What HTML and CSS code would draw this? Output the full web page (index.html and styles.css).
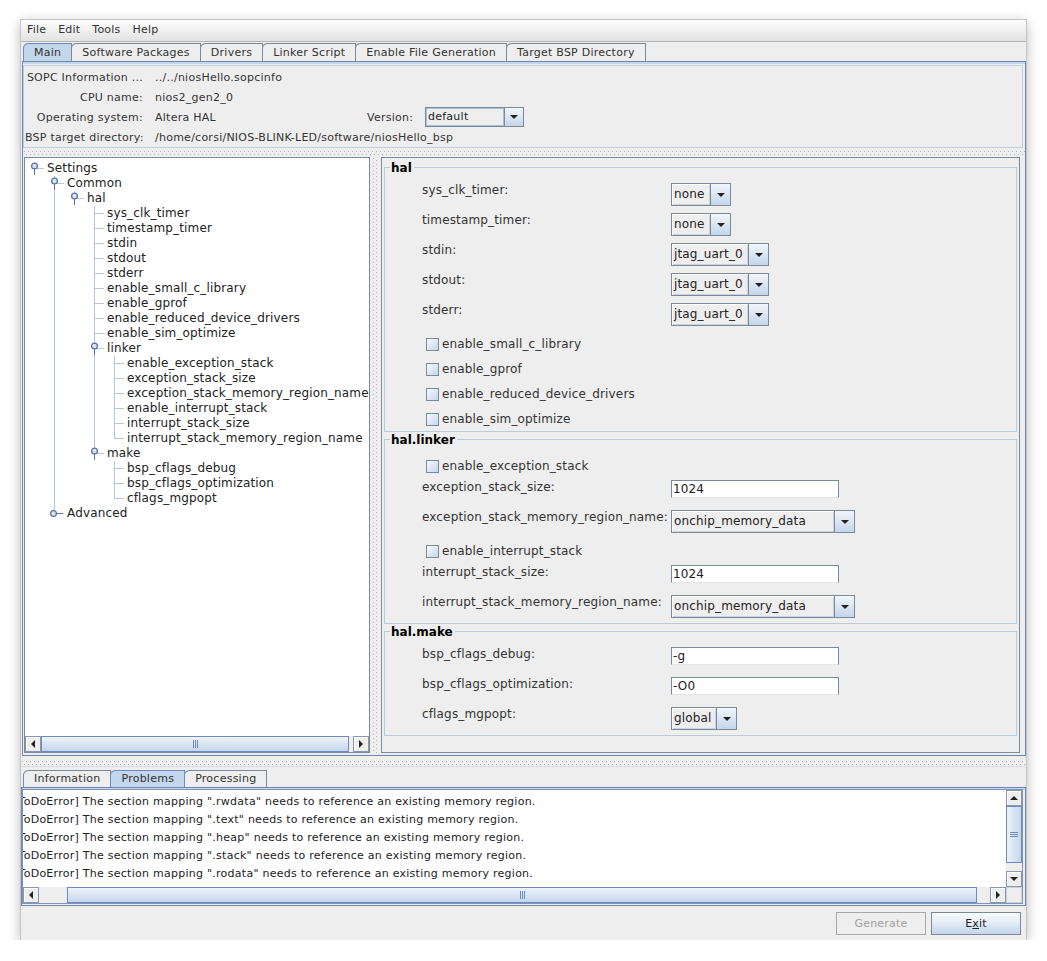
FILE: index.html
```html
<!DOCTYPE html>
<html lang="en">
<head>
    <meta charset="UTF-8">
    <title>Nios II BSP Editor</title>
    <link rel="stylesheet" href="styles.css">
</head>
<body>
    <div class="window">
        <div class="menubar">
            <span class="menu">File</span>
            <span class="menu">Edit</span>
            <span class="menu">Tools</span>
            <span class="menu">Help</span>
        </div>

        <div class="top-tabs">
            <div class="tab-strip">
                <div class="tab selected">Main</div>
                <div class="tab">Software Packages</div>
                <div class="tab">Drivers</div>
                <div class="tab">Linker Script</div>
                <div class="tab">Enable File Generation</div>
                <div class="tab">Target BSP Directory</div>
            </div>

            <div class="tab-content main-content">
                <div class="info-panel">
                    <span class="info-label">SOPC Information ...</span>
                    <span class="info-value wide">../../niosHello.sopcinfo</span>
                    <span class="info-label">CPU name:</span>
                    <span class="info-value wide">nios2_gen2_0</span>
                    <span class="info-label">Operating system:</span>
                    <span class="info-value">Altera HAL</span>
                    <span class="info-label">Version:</span>
                    <div class="combo combo-version">
                        <span class="combo-value">default</span>
                        <span class="combo-arrow"><i class="tri-down"></i></span>
                    </div>
                    <span class="info-label">BSP target directory:</span>
                    <span class="info-value wide">/home/corsi/NIOS-BLINK-LED/software/niosHello_bsp</span>
                </div>

                <div class="divider-h"></div>

                <div class="split">
                    <div class="tree-pane">
                        <div class="tree" id="tree"></div>
                        <div class="hscroll tree-hscroll">
                            <span class="sb-btn"><i class="tri-left"></i></span>
                            <span class="sb-thumb"></span>
                            <span class="sb-track tail"></span>
                            <span class="sb-btn"><i class="tri-right"></i></span>
                        </div>
                    </div>

                    <div class="divider-v"></div>

                    <div class="settings-pane">
                        <section class="group">
                            <div class="group-title"><span>hal</span></div>
                            <div class="group-body">
                                <div class="field-row">
                                    <label>sys_clk_timer:</label>
                                    <div class="combo combo-none"><span class="combo-value">none</span><span class="combo-arrow"><i class="tri-down"></i></span></div>
                                </div>
                                <div class="field-row">
                                    <label>timestamp_timer:</label>
                                    <div class="combo combo-none"><span class="combo-value">none</span><span class="combo-arrow"><i class="tri-down"></i></span></div>
                                </div>
                                <div class="field-row">
                                    <label>stdin:</label>
                                    <div class="combo combo-uart"><span class="combo-value">jtag_uart_0</span><span class="combo-arrow"><i class="tri-down"></i></span></div>
                                </div>
                                <div class="field-row">
                                    <label>stdout:</label>
                                    <div class="combo combo-uart"><span class="combo-value">jtag_uart_0</span><span class="combo-arrow"><i class="tri-down"></i></span></div>
                                </div>
                                <div class="field-row">
                                    <label>stderr:</label>
                                    <div class="combo combo-uart"><span class="combo-value">jtag_uart_0</span><span class="combo-arrow"><i class="tri-down"></i></span></div>
                                </div>
                                <div class="check-row"><span class="check-box"></span>enable_small_c_library</div>
                                <div class="check-row"><span class="check-box"></span>enable_gprof</div>
                                <div class="check-row"><span class="check-box"></span>enable_reduced_device_drivers</div>
                                <div class="check-row"><span class="check-box"></span>enable_sim_optimize</div>
                            </div>
                        </section>

                        <section class="group">
                            <div class="group-title"><span>hal.linker</span></div>
                            <div class="group-body">
                                <div class="check-row"><span class="check-box"></span>enable_exception_stack</div>
                                <div class="field-row">
                                    <label>exception_stack_size:</label>
                                    <div class="text-field">1024</div>
                                </div>
                                <div class="field-row">
                                    <label>exception_stack_memory_region_name:</label>
                                    <div class="combo combo-memory"><span class="combo-value">onchip_memory_data</span><span class="combo-arrow"><i class="tri-down"></i></span></div>
                                </div>
                                <div class="check-row"><span class="check-box"></span>enable_interrupt_stack</div>
                                <div class="field-row">
                                    <label>interrupt_stack_size:</label>
                                    <div class="text-field">1024</div>
                                </div>
                                <div class="field-row">
                                    <label>interrupt_stack_memory_region_name:</label>
                                    <div class="combo combo-memory"><span class="combo-value">onchip_memory_data</span><span class="combo-arrow"><i class="tri-down"></i></span></div>
                                </div>
                            </div>
                        </section>

                        <section class="group">
                            <div class="group-title"><span>hal.make</span></div>
                            <div class="group-body">
                                <div class="field-row">
                                    <label>bsp_cflags_debug:</label>
                                    <div class="text-field">-g</div>
                                </div>
                                <div class="field-row">
                                    <label>bsp_cflags_optimization:</label>
                                    <div class="text-field">-O0</div>
                                </div>
                                <div class="field-row">
                                    <label>cflags_mgpopt:</label>
                                    <div class="combo combo-global"><span class="combo-value">global</span><span class="combo-arrow"><i class="tri-down"></i></span></div>
                                </div>
                            </div>
                        </section>
                    </div>
                </div>
            </div>
        </div>

        <div class="divider-h outer"></div>

        <div class="bottom-tabs">
            <div class="tab-strip small">
                <div class="tab">Information</div>
                <div class="tab selected">Problems</div>
                <div class="tab">Processing</div>
            </div>
            <div class="tab-content bottom-content">
                <div class="msg-pane">
                    <div class="msg-row">
                        <div class="messages">
                            <div class="msg">[ToDoError] The section mapping ".rwdata" needs to reference an existing memory region.</div>
                            <div class="msg">[ToDoError] The section mapping ".text" needs to reference an existing memory region.</div>
                            <div class="msg">[ToDoError] The section mapping ".heap" needs to reference an existing memory region.</div>
                            <div class="msg">[ToDoError] The section mapping ".stack" needs to reference an existing memory region.</div>
                            <div class="msg">[ToDoError] The section mapping ".rodata" needs to reference an existing memory region.</div>
                            <div class="msg">[ToDoError] The section mapping ".bss" needs to reference an existing memory region.</div>
                        </div>
                        <div class="vscroll">
                            <span class="sb-btn"><i class="tri-up"></i></span>
                            <span class="sb-thumb"></span>
                            <span class="sb-track"></span>
                            <span class="sb-btn"><i class="tri-down"></i></span>
                        </div>
                    </div>
                    <div class="hscroll msg-hscroll">
                        <span class="sb-btn"><i class="tri-left"></i></span>
                        <span class="sb-track lead"></span>
                        <span class="sb-thumb"></span>
                        <span class="sb-track tail"></span>
                        <span class="sb-btn"><i class="tri-right"></i></span>
                        <span class="sb-corner"></span>
                    </div>
                </div>
            </div>
        </div>

        <div class="button-bar">
            <button class="btn" disabled>Generate</button>
            <button class="btn">E<u>x</u>it</button>
        </div>
    </div>

    <script>
        const settingsTree = ['Settings', [
            ['Common', [
                ['hal', [
                    'sys_clk_timer', 'timestamp_timer', 'stdin', 'stdout', 'stderr',
                    'enable_small_c_library', 'enable_gprof', 'enable_reduced_device_drivers', 'enable_sim_optimize',
                    ['linker', [
                        'enable_exception_stack', 'exception_stack_size', 'exception_stack_memory_region_name',
                        'enable_interrupt_stack', 'interrupt_stack_size', 'interrupt_stack_memory_region_name'
                    ]],
                    ['make', ['bsp_cflags_debug', 'bsp_cflags_optimization', 'cflags_mgpopt']]
                ]]
            ]],
            ['Advanced', null]
        ]];

        const LINE = '#b3c7df';
        const KEY = '#5873a8';
        const treeEl = document.getElementById('tree');

        function addRow(label, level, isLast, legs, kind) {
            const width = (level + 1) * 20;
            const cx = level * 20 + 9.5;
            let svg = '';

            legs.forEach((on, k) => {
                if (on) svg += `<line x1="${k * 20 + 9.5}" y1="0" x2="${k * 20 + 9.5}" y2="15" stroke="${LINE}"/>`;
            });
            if (level > 0) {
                svg += `<line x1="${cx}" y1="0" x2="${cx}" y2="${isLast ? 8 : 15}" stroke="${LINE}"/>`;
            }
            svg += `<line x1="${cx}" y1="7.5" x2="${level * 20 + 19}" y2="7.5" stroke="${LINE}"/>`;

            if (kind === 'open') {
                svg += `<line x1="${cx}" y1="8" x2="${cx}" y2="14" stroke="${KEY}" stroke-width="1.6"/>`;
                svg += `<circle cx="${cx}" cy="5" r="2.9" fill="#dbe6f3" stroke="${KEY}" stroke-width="1.3"/>`;
            } else if (kind === 'closed') {
                svg += `<line x1="${cx + 2}" y1="7.5" x2="${cx + 8}" y2="7.5" stroke="${KEY}" stroke-width="1.6"/>`;
                svg += `<circle cx="${cx - 1}" cy="7.5" r="2.9" fill="#dbe6f3" stroke="${KEY}" stroke-width="1.3"/>`;
            }

            const row = document.createElement('div');
            row.className = 'tree-row';
            row.innerHTML = `<svg width="${width}" height="15" viewBox="0 0 ${width} 15">${svg}</svg><span class="tree-label">${label}</span>`;
            treeEl.appendChild(row);
        }

        function walk(node, level, isLast, legs) {
            const label = Array.isArray(node) ? node[0] : node;
            const children = Array.isArray(node) ? node[1] : undefined;
            const kind = children === undefined ? 'leaf' : (children === null ? 'closed' : 'open');

            addRow(label, level, isLast, legs, kind);

            if (Array.isArray(children)) {
                const childLegs = legs.concat([level >= 1 && !isLast]);
                children.forEach((child, i) => walk(child, level + 1, i === children.length - 1, childLegs));
            }
        }

        walk(settingsTree, 0, true, []);
    </script>
</body>
</html>
```

FILE: styles.css
```css
* {
    box-sizing: border-box;
    margin: 0;
    padding: 0;
}

body {
    font-family: "DejaVu Sans", "Liberation Sans", sans-serif;
    font-size: 12px;
    letter-spacing: 0.15px;
    color: #333;
    background-color: #fff;
}

.window {
    margin: 20px 0 0 21px;
    width: 1005px;
    height: 920px;
    display: flex;
    flex-direction: column;
    background-color: #eee;
    box-shadow: 0 0 0 1px #c4c4c4, 0 3px 12px rgba(0,0,0,0.3);
}

/* menu bar */
.menubar {
    flex: none;
    height: 22px;
    display: flex;
    align-items: center;
    padding: 0 0 2px 0;
    background: linear-gradient(#fdfdfd, #e2e2e2);
    border-bottom: 1px solid #b4b4b4;
}

.menu {
    padding: 0 6px;
    font-size: 11px;
    letter-spacing: 0.2px;
    color: #333;
}

/* tabbed panes */
.top-tabs {
    flex: none;
    height: 714px;
    padding-top: 1px;
    margin-left: 1px;
    display: flex;
    flex-direction: column;
}

.tab-strip {
    flex: none;
    display: flex;
    height: 18px;
    padding-left: 1px;
}

.tab-strip.small {
    height: 17px;
    margin-top: 3px;
    padding-left: 2px;
}

.tab {
    height: 100%;
    padding: 0 10px;
    font-size: 11px;
    letter-spacing: 0.25px;
    line-height: 17px;
    color: #333;
    background-color: #eee;
    border: 1px solid #7a8a99;
    border-bottom: none;
    border-top-left-radius: 6px 5px;
    margin-right: -1px;
    white-space: nowrap;
}

.tab-strip.small .tab {
    line-height: 16px;
}

.tab.selected {
    background-color: #c3d6ec;
    border-color: #6d8ac0;
}

.tab-content {
    border: 1px solid #6f87b0;
    background-color: #eee;
    box-shadow: inset 0 2px 0 #c3d6ec;
}

.main-content {
    height: 695px;
    padding: 3px 0 2px 0;
    display: flex;
    flex-direction: column;
}

/* SOPC info block */
.info-panel {
    flex: none;
    height: 83px;
    margin-right: 2px;
    padding: 1px 0 0 1px;
    border: 1px solid #b8cfe5;
    display: grid;
    grid-template-columns: 118px 200px 46px 99px;
    grid-template-rows: repeat(4, 20px);
    column-gap: 12px;
    align-items: center;
    font-size: 11px;
    letter-spacing: 0.25px;
}

.info-label {
    text-align: right;
    white-space: nowrap;
}

.info-value {
    white-space: nowrap;
}

.info-value.wide {
    grid-column: 2 / -1;
}

/* split pane dividers */
.divider-h {
    flex: none;
    height: 9px;
    background-image:
        linear-gradient(90deg, #a9b3bf 1px, transparent 1px),
        linear-gradient(90deg, #a9b3bf 1px, transparent 1px);
    background-size: 4px 1px, 4px 1px;
    background-repeat: repeat-x;
    background-position: 1px 3px, 3px 6px;
}

.divider-h.outer {
    height: 11px;
    margin-right: 1px;
    background-position: 1px 5px, 3px 8px;
    border-bottom: 1px solid #dcdcdc;
}

.divider-v {
    flex: none;
    width: 11px;
    background-image:
        linear-gradient(#a9b3bf 1px, transparent 1px),
        linear-gradient(#a9b3bf 1px, transparent 1px);
    background-size: 1px 4px, 1px 4px;
    background-repeat: repeat-y;
    background-position: 3px 1px, 6px 3px;
}

.split {
    flex: none;
    height: 596px;
    display: flex;
    padding: 0 5px 0 1px;
}

/* settings tree */
.tree-pane {
    flex: none;
    width: 346px;
    display: flex;
    flex-direction: column;
    border: 1px solid #7a8a99;
    background-color: #fff;
}

.tree {
    flex: 1;
    overflow: hidden;
    padding-top: 3px;
}

.tree-row {
    display: flex;
    align-items: center;
    height: 15px;
    white-space: nowrap;
}

.tree-row svg {
    flex: none;
    shape-rendering: crispEdges;
}

.tree-row svg circle {
    shape-rendering: geometricPrecision;
}

.tree-label {
    margin-left: 2px;
    color: #222;
    line-height: 15px;
}

/* scrollbars */
.hscroll {
    flex: none;
    display: flex;
    height: 16px;
    background-color: #eee;
}

.vscroll {
    flex: none;
    display: flex;
    flex-direction: column;
    width: 16px;
    background-color: #eee;
}

.sb-btn {
    flex: none;
    width: 16px;
    height: 16px;
    display: flex;
    align-items: center;
    justify-content: center;
    border: 1px solid #8a99aa;
    background-color: #eee;
    box-shadow: inset 1px 1px 0 #fff;
}

.sb-track {
    flex: none;
    background-color: #eee;
}

.vscroll .sb-track {
    height: 8px;
}

.sb-thumb {
    flex: 1;
    display: flex;
    align-items: center;
    justify-content: center;
    border: 1px solid #6d8ac0;
    background: linear-gradient(#eef3f9, #c4d6ec);
}

.vscroll .sb-thumb {
    flex: none;
    height: 57px;
    background: linear-gradient(90deg, #eef3f9, #c4d6ec);
}

.hscroll .sb-thumb::after {
    content: "";
    width: 5px;
    height: 8px;
    background: repeating-linear-gradient(90deg, #6d8ac0 0 1px, transparent 1px 2px);
}

.vscroll .sb-thumb::after {
    content: "";
    width: 8px;
    height: 5px;
    background: repeating-linear-gradient(#6d8ac0 0 1px, transparent 1px 2px);
}

.tree-hscroll .sb-track.tail {
    width: 4px;
}

.msg-hscroll .sb-track.lead {
    width: 28px;
}

.msg-hscroll .sb-track.tail {
    width: 13px;
}

.sb-corner {
    flex: none;
    width: 16px;
    border: 1px solid #c8d0d8;
    background-color: #eee;
}

.tri-down, .tri-up, .tri-left, .tri-right {
    display: block;
    width: 0;
    height: 0;
    border: 4px solid transparent;
}

.tri-down {
    border-top-color: #222;
    border-bottom-width: 0;
}

.tri-up {
    border-bottom-color: #222;
    border-top-width: 0;
}

.tri-left {
    border-right-color: #222;
    border-left-width: 0;
}

.tri-right {
    border-left-color: #222;
    border-right-width: 0;
}

/* settings editor */
.settings-pane {
    flex: none;
    width: 639px;
    border: 1px solid #7a8a99;
    background-color: #eee;
    overflow: hidden;
}

.group {
    margin: 1px 2px 0;
}

.group:first-child {
    margin-top: 3px;
}

.group-title {
    display: flex;
    height: 15px;
    line-height: 15px;
    font-weight: bold;
    letter-spacing: 0;
    color: #000;
}

.group-title::before,
.group-title::after {
    content: "";
    align-self: flex-end;
    height: 8px;
    border-top: 1px solid #bccbdc;
}

.group-title::before {
    width: 5px;
    border-left: 1px solid #bccbdc;
}

.group-title::after {
    flex: 1;
    border-right: 1px solid #bccbdc;
}

.group-title span {
    padding: 0 2px 0 1px;
}

.group-body {
    padding: 7px 0 0 37px;
    border: 1px solid #bccbdc;
    border-top: none;
}

.field-row {
    display: grid;
    grid-template-columns: 246px auto;
    column-gap: 3px;
    align-items: start;
    justify-items: start;
    height: 23px;
    margin-bottom: 7px;
}

.field-row label {
    line-height: 15px;
    white-space: nowrap;
    color: #333;
}

.check-row {
    display: flex;
    align-items: center;
    gap: 3px;
    height: 22px;
    margin-bottom: 3px;
    padding-left: 4px;
    color: #333;
}

.group-body > :last-child {
    margin-bottom: 5px;
}

.group-body > .check-row:last-child {
    margin-bottom: 1px;
}

.check-box {
    flex: none;
    width: 13px;
    height: 13px;
    border: 1px solid #7a8a99;
    background: linear-gradient(135deg, #f7fafd, #c5d6ea);
}

.text-field {
    width: 168px;
    height: 18px;
    padding: 0 1px;
    line-height: 16px;
    background-color: #fff;
    border: 1px solid #7a8a99;
    border-bottom-color: #e4e4e4;
    color: #222;
}

/* combo boxes */
.combo {
    display: flex;
    height: 23px;
    border: 1px solid #7a8a99;
    background-color: #eee;
}

.combo-value {
    flex: 1;
    padding-left: 2px;
    line-height: 20px;
    color: #222;
    white-space: nowrap;
    box-shadow: inset 1px 1px 0 #fff, inset -1px -1px 0 #c9d3de;
}

.combo-arrow {
    flex: none;
    width: 20px;
    display: flex;
    align-items: center;
    justify-content: center;
    border-left: 1px solid #7a8a99;
    background: linear-gradient(#f2f6fb, #c4d5ea);
}

.combo-none { width: 60px; }
.combo-uart { width: 98px; }
.combo-memory { width: 184px; }
.combo-global { width: 66px; }

.combo-version {
    width: 99px;
    height: 20px;
    font-size: 11px;
}

.combo-version .combo-value {
    line-height: 17px;
    box-shadow: inset 0 0 0 1px #a9bfda;
}

.combo-version .combo-arrow {
    width: 19px;
}

/* problems pane */
.bottom-tabs {
    flex: none;
    height: 139px;
    display: flex;
    flex-direction: column;
}

.bottom-content {
    height: 119px;
    padding: 1px 2px 1px 0;
}

.msg-pane {
    height: 115px;
    display: flex;
    flex-direction: column;
    border: 1px solid #8094b4;
    background-color: #fff;
}

.msg-row {
    flex: 1;
    display: flex;
    min-height: 0;
}

.messages {
    flex: 1;
    overflow: hidden;
    padding-top: 3px;
    font-size: 11px;
    letter-spacing: 0.26px;
    line-height: 18px;
    color: #222;
}

.msg {
    margin-left: -9px;
    white-space: nowrap;
}

/* buttons */
.button-bar {
    flex: none;
    height: 34px;
    display: flex;
    justify-content: flex-end;
    gap: 5px;
    padding: 6px 5px 0 0;
}

.btn {
    width: 90px;
    height: 23px;
    font-family: inherit;
    font-size: 11px;
    letter-spacing: 0.2px;
    color: #222;
    border: 1px solid #7a8a99;
    background: linear-gradient(#fbfcfe, #dfe8f3 55%, #c4d5ea);
}

.btn u {
    text-decoration-thickness: 1px;
}

.btn:disabled {
    color: #a2a2a2;
    border-color: #a8a8a8;
    background: #eee;
}
```
